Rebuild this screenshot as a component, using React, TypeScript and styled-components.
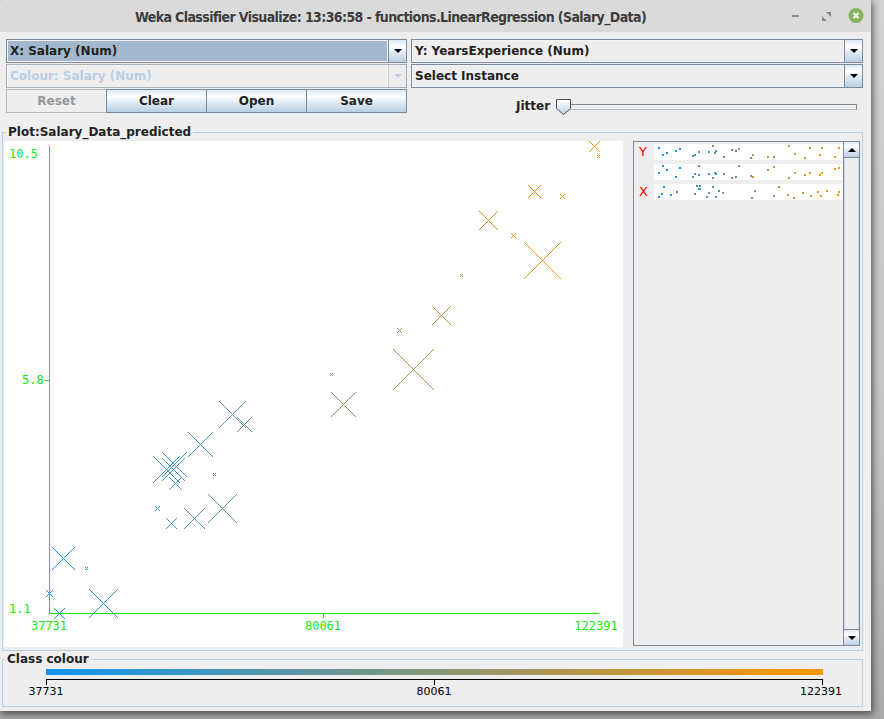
import React from "react";
import styled, { createGlobalStyle } from "styled-components";

const GlobalStyle = createGlobalStyle`
  html, body { margin: 0; padding: 0; }
  body { background: #bdbdbd; font-family: "DejaVu Sans", Verdana, sans-serif; }
  #root { width: 884px; height: 719px; }
`;

/* ---------- data ---------- */
const DATA: [number, number][] = [
  [1.1, 39343], [1.3, 46205], [1.5, 37731], [2.0, 43525], [2.2, 39891],
  [2.9, 56642], [3.0, 60150], [3.2, 54445], [3.2, 64445], [3.7, 57189],
  [3.9, 63218], [4.0, 55794], [4.0, 56957], [4.1, 57081], [4.5, 61111],
  [4.9, 67938], [5.1, 66029], [5.3, 83088], [5.9, 81363], [6.0, 93940],
  [6.8, 91738], [7.1, 98273], [7.9, 101302], [8.2, 113812], [8.7, 109431],
  [9.0, 105582], [9.5, 116969], [9.6, 112635], [10.3, 122391], [10.5, 121872],
];
const SLOPE = 9449.962321;
const INTERCEPT = 25792.2002;
const MIN_S = 37731;
const MAX_S = 122391;
const MIN_Y = 1.1;
const MAX_Y = 10.5;

const colourOf = (s: number) => {
  const r = ((s - MIN_S) / (MAX_S - MIN_S)) * 240 + 15;
  return `rgb(${Math.floor(r)},150,${Math.floor(255 - r)})`;
};

const preds = DATA.map(([y]) => SLOPE * y + INTERCEPT);
const errs = DATA.map(([, s], i) => Math.abs(s - preds[i]));
const minErr = Math.min(...errs);
const maxErr = Math.max(...errs);

const crossPath = (x: number, y: number, s: number) => {
  let d = "";
  for (let k = -s; k <= s; k++) {
    d += `M${x + k} ${y + k}h1v1h-1z`;
    if (k !== 0) d += `M${x + k} ${y - k}h1v1h-1z`;
  }
  return d;
};

const points = DATA.map(([yrs, s], i) => {
  let size = Math.floor(((errs[i] - minErr) / (maxErr - minErr)) * 20);
  if (size === 0) size = 1;
  const px = Math.floor(49 + ((s - MIN_S) / (MAX_S - MIN_S)) * 549) - 4;
  const py = Math.floor(613 - ((yrs - MIN_Y) / (MAX_Y - MIN_Y)) * 466.6) - 141;
  return { d: crossPath(px, py, size), colour: colourOf(s) };
});

const rnd = (n: number) => {
  const v = Math.sin(n * 12.9898 + 78.233) * 43758.5453;
  return v - Math.floor(v);
};

const minP = Math.min(...preds);
const maxP = Math.max(...preds);
const strips = [
  DATA.map(([y]) => (y - MIN_Y) / (MAX_Y - MIN_Y)),
  preds.map((p) => (p - minP) / (maxP - minP)),
  DATA.map(([, s]) => (s - MIN_S) / (MAX_S - MIN_S)),
];

/* ---------- window ---------- */
const Desktop = styled.div`
  width: 884px;
  height: 719px;
  overflow: hidden;
  background: linear-gradient(to bottom, #d2d2d2 0%, #c4c4c4 60%, #a9a9a9 100%);
`;

const Window = styled.div`
  width: 871px;
  height: 711px;
  display: flex;
  flex-direction: column;
  background: #eeeeee;
  box-shadow: 1px 2px 7px 1px rgba(0, 0, 0, 0.55);
  border-radius: 3px 3px 0 0;
  overflow: hidden;
`;

const TitleBar = styled.div`
  height: 32px;
  flex: none;
  display: flex;
  align-items: center;
  background: #dadada;
`;

const Title = styled.div`
  flex: 1;
  text-align: center;
  font-family: "DejaVu Sans Condensed", "DejaVu Sans", sans-serif;
  font-weight: bold;
  font-size: 14px;
  letter-spacing: -0.6px;
  color: #3c3c3c;
  padding-top: 1px;
`;

const WinControls = styled.div`
  display: flex;
  height: 100%;
`;

const WinButton = styled.div`
  width: 30px;
  height: 100%;
  display: flex;
  align-items: center;
  justify-content: center;
`;

const Content = styled.div`
  flex: 1;
  display: flex;
  flex-direction: column;
  padding: 7px 8px 0 2px;
`;

/* ---------- controls ---------- */
const Controls = styled.div`
  display: grid;
  grid-template-columns: 401px 452px;
  column-gap: 4px;
  margin-left: 4px;
`;

const Column = styled.div`
  display: flex;
  flex-direction: column;
  gap: 1px;
`;

type Variant = "selected" | "normal" | "disabled";

const Combo = styled.div<{ $variant: Variant }>`
  display: flex;
  height: 24px;
  box-sizing: border-box;
  border: 1px solid ${(p) => (p.$variant === "disabled" ? "#a4b0bc" : "#7a8a99")};
  background: #eeeeee;
`;

const ComboField = styled.div<{ $variant: Variant }>`
  flex: 1;
  display: flex;
  align-items: center;
  padding-left: 2px;
  border: 1px solid #f4f4f4;
  background: ${(p) => (p.$variant === "selected" ? "#a3b8cc" : "#eeeeee")};
  color: ${(p) => (p.$variant === "disabled" ? "#b8cfe5" : "#222222")};
  font: bold 12px "DejaVu Sans", sans-serif;
  white-space: nowrap;
`;

const ArrowButton = styled.div<{ $variant: Variant }>`
  width: 17px;
  display: flex;
  align-items: center;
  justify-content: center;
  border-left: 1px solid ${(p) => (p.$variant === "disabled" ? "#c4d2e0" : "#7a8a99")};
  background: ${(p) =>
    p.$variant === "disabled"
      ? "#eeeeee"
      : "linear-gradient(to bottom, #dde8f3 0%, #ffffff 30%, #dde8f3 60%, #b8cfe5 100%)"};
`;

const ButtonRow = styled.div`
  display: flex;
  height: 24px;
`;

const Button = styled.button<{ $disabled?: boolean }>`
  width: 101px;
  height: 24px;
  box-sizing: border-box;
  margin: 0 0 0 -1px;
  padding: 0;
  &:first-child { margin-left: 0; }
  border: 1px solid ${(p) => (p.$disabled ? "#b0b8c0" : "#7a8a99")};
  background: ${(p) =>
    p.$disabled
      ? "#eeeeee"
      : "linear-gradient(to bottom, #dde8f3 0%, #ffffff 30%, #dde8f3 60%, #b8cfe5 100%)"};
  color: ${(p) => (p.$disabled ? "#999999" : "#222222")};
  font: bold 12px "DejaVu Sans", sans-serif;
  position: relative;
  z-index: ${(p) => (p.$disabled ? 0 : 1)};
`;

const JitterRow = styled.div`
  height: 24px;
  box-sizing: border-box;
  display: flex;
  align-items: flex-start;
  padding: 10px 0 0 105px;
`;

const JitterLabel = styled.span`
  font: bold 12px/14px "DejaVu Sans", sans-serif;
  color: #222222;
  margin-right: 6px;
`;

const Slider = styled.div`
  position: relative;
  width: 301px;
  height: 16px;
`;

const Track = styled.div`
  margin: 5px 0 0 8px;
  height: 6px;
  box-sizing: border-box;
  border: 1px solid #7a8a99;
  border-bottom-color: #b0bac4;
  background: #eeeeee;
`;

const Thumb = styled.svg`
  position: absolute;
  left: 0;
  top: 0;
`;

/* ---------- titled panels ---------- */
const TitledPanel = styled.fieldset<{ $pad: string; $mt: number }>`
  margin: ${(p) => p.$mt}px 0 0 0;
  padding: ${(p) => p.$pad};
  border: 1px solid #b8cfe5;
  min-width: 0;
`;

const PanelTitle = styled.legend`
  margin-left: 2px;
  padding: 0 2px;
  font: bold 12px/14px "DejaVu Sans", sans-serif;
  color: #222222;
`;

const PlotRow = styled.div`
  display: flex;
  gap: 10px;
  height: 506px;
  align-items: flex-start;
`;

const PlotCanvas = styled.svg`
  display: block;
  background: #ffffff;
  flex: none;
`;

const AttrPanel = styled.div`
  width: 231px;
  height: 505px;
  box-sizing: border-box;
  border: 1px solid #7a8a99;
  display: flex;
`;

const StripList = styled.div`
  flex: 1;
  display: flex;
  flex-direction: column;
  gap: 4px;
  padding-top: 2px;
`;

const StripRow = styled.div`
  display: flex;
  height: 16px;
`;

const AxisMark = styled.span`
  width: 20px;
  box-sizing: border-box;
  padding-left: 5px;
  color: #ff0000;
  font: 13px/16px "DejaVu Sans", sans-serif;
`;

const Strip = styled.svg`
  display: block;
  background: #ffffff;
`;

const ScrollBar = styled.div`
  width: 16px;
  box-sizing: border-box;
  border-left: 1px solid #7a8a99;
  display: flex;
  flex-direction: column;
`;

const ScrollButton = styled.div<{ $top?: boolean }>`
  height: 16px;
  box-sizing: border-box;
  display: flex;
  align-items: center;
  justify-content: center;
  ${(p) => (p.$top ? "border-bottom" : "border-top")}: 1px solid #7a8a99;
  background: linear-gradient(to bottom, #dde8f3 0%, #ffffff 30%, #dde8f3 60%, #b8cfe5 100%);
`;

const ScrollTrack = styled.div`
  flex: 1;
  background: #eeeeee;
  border-left: 1px solid #c8d8e8;
  border-right: 1px solid #c8d8e8;
`;

const ScaleCanvas = styled.svg`
  display: block;
`;

/* ---------- small drawings ---------- */
const DownArrow = ({ colour = "#000" }: { colour?: string }) => (
  <svg width="8" height="4" viewBox="0 0 8 4">
    <path d="M0 0H8L4 4Z" fill={colour} />
  </svg>
);

const UpArrow = () => (
  <svg width="8" height="4" viewBox="0 0 8 4">
    <path d="M0 4H8L4 0Z" fill="#000" />
  </svg>
);

const PlotLabel = styled.text`
  font-family: "DejaVu Sans Mono", monospace;
  font-size: 12px;
  fill: #12e612;
`;

const ScaleLabel = styled.text`
  font-family: "DejaVu Sans", sans-serif;
  font-size: 11px;
  fill: #000000;
`;

const GREEN = "#14e614";

export default function App() {
  return (
    <>
      <GlobalStyle />
      <Desktop>
        <Window>
          <TitleBar>
            <Title>Weka Classifier Visualize: 13:36:58 - functions.LinearRegression (Salary_Data)</Title>
            <WinControls>
              <WinButton>
                <svg width="8" height="2" viewBox="0 0 8 2">
                  <rect width="7" height="2" fill="#8a8a8a" />
                </svg>
              </WinButton>
              <WinButton>
                <svg width="9" height="9" viewBox="0 0 9 9">
                  <path d="M4 0H9V5Z M0 4V9H5Z" fill="#8a8a8a" />
                </svg>
              </WinButton>
              <WinButton>
                <svg width="16" height="16" viewBox="0 0 16 16">
                  <circle cx="8" cy="7.5" r="7.5" fill="#86b35c" />
                  <path d="M5.5 5L10.5 10M10.5 5L5.5 10" stroke="#ffffff" strokeWidth="1.8" />
                </svg>
              </WinButton>
            </WinControls>
          </TitleBar>

          <Content>
            <Controls>
              <Column>
                <Combo $variant="selected">
                  <ComboField $variant="selected">X: Salary (Num)</ComboField>
                  <ArrowButton $variant="selected"><DownArrow /></ArrowButton>
                </Combo>
                <Combo $variant="disabled">
                  <ComboField $variant="disabled">Colour: Salary (Num)</ComboField>
                  <ArrowButton $variant="disabled"><DownArrow colour="#b8cfe5" /></ArrowButton>
                </Combo>
                <ButtonRow>
                  <Button $disabled>Reset</Button>
                  <Button>Clear</Button>
                  <Button>Open</Button>
                  <Button>Save</Button>
                </ButtonRow>
              </Column>
              <Column>
                <Combo $variant="normal">
                  <ComboField $variant="normal">Y: YearsExperience (Num)</ComboField>
                  <ArrowButton $variant="normal"><DownArrow /></ArrowButton>
                </Combo>
                <Combo $variant="normal">
                  <ComboField $variant="normal">Select Instance</ComboField>
                  <ArrowButton $variant="normal"><DownArrow /></ArrowButton>
                </Combo>
                <JitterRow>
                  <JitterLabel>Jitter</JitterLabel>
                  <Slider>
                    <Track />
                    <Thumb width="16" height="17" viewBox="0 0 16 17">
                      <defs>
                        <linearGradient id="thumbGrad" x1="0" y1="0" x2="0" y2="1">
                          <stop offset="0" stopColor="#ffffff" />
                          <stop offset="1" stopColor="#bfd2e6" />
                        </linearGradient>
                      </defs>
                      <path d="M0.5 0.5H14.5V9.5L7.5 15.5L0.5 9.5Z" fill="url(#thumbGrad)" stroke="#4a4f55" />
                    </Thumb>
                  </Slider>
                </JitterRow>
              </Column>
            </Controls>

            <TitledPanel $pad="2px 3px 3px 1px" $mt={12}>
              <PanelTitle>Plot:Salary_Data_predicted</PanelTitle>
              <PlotRow>
                <PlotCanvas width="619" height="506" viewBox="0 0 619 506" shapeRendering="crispEdges">
                  <line x1="45.5" y1="5" x2="45.5" y2="472.5" stroke={GREEN} />
                  <line x1="45" y1="472.5" x2="595" y2="472.5" stroke={GREEN} />
                  <line x1="41" y1="239.5" x2="45" y2="239.5" stroke={GREEN} />
                  <line x1="319.5" y1="472" x2="319.5" y2="477" stroke={GREEN} />
                  <PlotLabel x="5" y="17">10.5</PlotLabel>
                  <PlotLabel x="18" y="243">5.8</PlotLabel>
                  <PlotLabel x="5" y="472">1.1</PlotLabel>
                  <PlotLabel x="45" y="489" textAnchor="middle">37731</PlotLabel>
                  <PlotLabel x="319" y="489" textAnchor="middle">80061</PlotLabel>
                  <PlotLabel x="592" y="489" textAnchor="middle">122391</PlotLabel>
                  {points.map((p, i) => (
                    <path key={i} d={p.d} fill={p.colour} />
                  ))}
                </PlotCanvas>
                <AttrPanel>
                  <StripList>
                    {strips.map((vals, si) => (
                      <StripRow key={si}>
                        <AxisMark>{si === 0 ? "Y" : si === 2 ? "X" : ""}</AxisMark>
                        <Strip width="189" height="16" viewBox="0 0 189 16">
                          {vals.map((t, i) => (
                            <rect
                              key={i}
                              x={Math.round(4 + t * 180)}
                              y={1 + Math.floor(rnd(si * 100 + i) * 13)}
                              width="2"
                              height="2"
                              fill={colourOf(DATA[i][1])}
                            />
                          ))}
                        </Strip>
                      </StripRow>
                    ))}
                  </StripList>
                  <ScrollBar>
                    <ScrollButton $top><UpArrow /></ScrollButton>
                    <ScrollTrack />
                    <ScrollButton><DownArrow /></ScrollButton>
                  </ScrollBar>
                </AttrPanel>
              </PlotRow>
            </TitledPanel>

            <TitledPanel $pad="0 1px 0 0" $mt={1}>
              <PanelTitle>Class colour</PanelTitle>
              <ScaleCanvas width="864" height="40" viewBox="0 0 864 40" shapeRendering="crispEdges">
                <defs>
                  <linearGradient id="classGrad" x1="0" y1="0" x2="1" y2="0">
                    <stop offset="0" stopColor="rgb(15,150,240)" />
                    <stop offset="1" stopColor="rgb(255,150,0)" />
                  </linearGradient>
                </defs>
                <rect x="43" y="3" width="777" height="6" fill="url(#classGrad)" />
                <line x1="43" y1="13.5" x2="820" y2="13.5" stroke="#000" />
                <line x1="43.5" y1="13" x2="43.5" y2="19" stroke="#000" />
                <line x1="431.5" y1="13" x2="431.5" y2="19" stroke="#000" />
                <line x1="819.5" y1="13" x2="819.5" y2="19" stroke="#000" />
                <ScaleLabel x="43" y="28.5" textAnchor="middle">37731</ScaleLabel>
                <ScaleLabel x="431" y="28.5" textAnchor="middle">80061</ScaleLabel>
                <ScaleLabel x="818" y="28.5" textAnchor="middle">122391</ScaleLabel>
              </ScaleCanvas>
            </TitledPanel>
          </Content>
        </Window>
      </Desktop>
    </>
  );
}
